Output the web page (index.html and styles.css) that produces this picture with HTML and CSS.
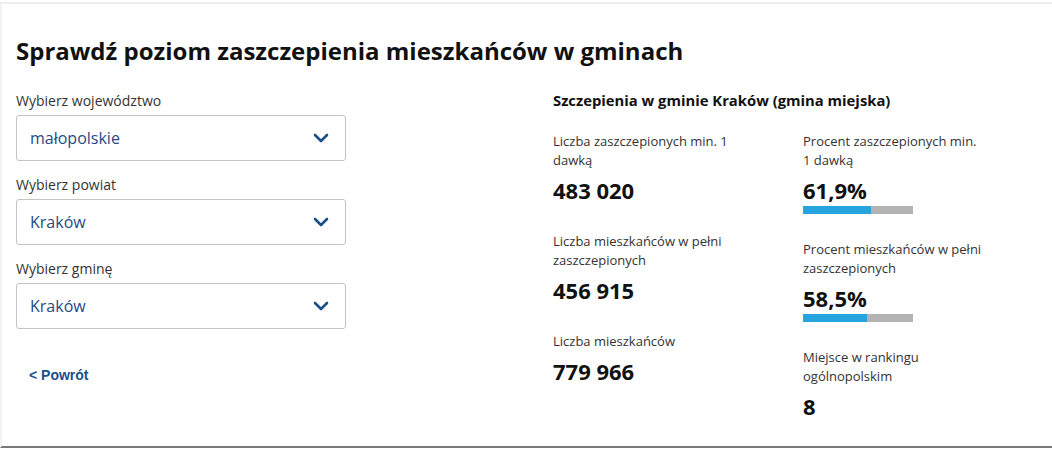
FILE: index.html
```
<!DOCTYPE html>
<html lang="pl">
<head>
<meta charset="utf-8">
<link rel="stylesheet" href="styles.css">
</head>
<body>
<div class="page">
  <section class="card">
    <h1 class="title">Sprawdź poziom zaszczepienia mieszkańców w gminach</h1>
    <div class="layout">
      <div class="filters">
        <div class="field">
          <div class="label">Wybierz województwo</div>
          <div class="select"><span>małopolskie</span><svg class="chev" width="16" height="10" viewBox="0 0 16 10"><path d="M2 2 L8 8 L14 2" fill="none" stroke="#1b4f8c" stroke-width="2.6" stroke-linecap="round" stroke-linejoin="round"/></svg></div>
        </div>
        <div class="field">
          <div class="label">Wybierz powiat</div>
          <div class="select"><span>Kraków</span><svg class="chev" width="16" height="10" viewBox="0 0 16 10"><path d="M2 2 L8 8 L14 2" fill="none" stroke="#1b4f8c" stroke-width="2.6" stroke-linecap="round" stroke-linejoin="round"/></svg></div>
        </div>
        <div class="field">
          <div class="label">Wybierz gminę</div>
          <div class="select"><span>Kraków</span><svg class="chev" width="16" height="10" viewBox="0 0 16 10"><path d="M2 2 L8 8 L14 2" fill="none" stroke="#1b4f8c" stroke-width="2.6" stroke-linecap="round" stroke-linejoin="round"/></svg></div>
        </div>
        <a class="back">&lt; Powrót</a>
      </div>
      <div class="stats">
        <h2 class="subtitle">Szczepienia w gminie Kraków (gmina miejska)</h2>
        <div class="cols">
          <div class="col">
            <div class="item">
              <div class="slabel">Liczba zaszczepionych min. 1 dawką</div>
              <div class="value">483 020</div>
            </div>
            <div class="item">
              <div class="slabel">Liczba mieszkańców w pełni zaszczepionych</div>
              <div class="value">456 915</div>
            </div>
            <div class="item">
              <div class="slabel">Liczba mieszkańców</div>
              <div class="value">779 966</div>
            </div>
          </div>
          <div class="col">
            <div class="item">
              <div class="slabel">Procent zaszczepionych min. 1 dawką</div>
              <div class="value">61,9%</div>
              <div class="bar"><div class="fill" style="width:61.9%"></div></div>
            </div>
            <div class="item">
              <div class="slabel">Procent mieszkańców w pełni zaszczepionych</div>
              <div class="value">58,5%</div>
              <div class="bar"><div class="fill" style="width:58.5%"></div></div>
            </div>
            <div class="item">
              <div class="slabel">Miejsce w rankingu ogólnopolskim</div>
              <div class="value">8</div>
            </div>
          </div>
        </div>
      </div>
    </div>
  </section>
</div>
</body>
</html>
```
FILE: styles.css
```
* { box-sizing: border-box; }
html, body { margin: 0; padding: 0; background: #fff; }
body { font-family: "Open Sans", "Noto Sans", sans-serif; color: #111; }
.page { padding-top: 2px; height: 449px; }
.card {
  height: 446px;
  border-top: 2px solid #ededed;
  border-left: 2px solid #f2f2f2;
  border-bottom: 2px solid #7a7a7a;
  padding: 31px 14px 0 14px;
}
.title {
  margin: 0 0 24px 0;
  font-size: 24px;
  font-weight: 700;
  line-height: 32px;
  color: #111;
}
.layout { display: grid; grid-template-columns: 330px 1fr; column-gap: 207px; }
.filters { display: flex; flex-direction: column; align-items: flex-start; }
.field { width: 100%; margin-bottom: 14px; }
.field:first-child { margin-bottom: 14px; }
.label { font-size: 14px; line-height: 20px; color: #333; margin-bottom: 4px; }
.select {
  height: 46px;
  border: 1px solid #c4c4c4;
  border-radius: 3px;
  display: flex;
  align-items: center;
  justify-content: space-between;
  padding: 0 16px 0 13px;
  font-size: 16px;
  color: #1f4a85;
}
.chev { display: block; }
.back {
  margin-top: 24px;
  padding-left: 13px;
  font-family: "Liberation Sans", Arial, sans-serif;
  font-weight: 700;
  font-size: 14px;
  line-height: 16px;
  color: #1b4f8c;
}
.subtitle { margin: 0 0 23px 0; font-size: 14.8px; font-weight: 700; line-height: 18px; color: #111; }
.cols { display: flex; }
.col { width: 250px; display: flex; flex-direction: column; }
.item { width: 180px; margin-bottom: 26px; }
.slabel { font-size: 13px; line-height: 19px; color: #333; }
.value { font-size: 22px; font-weight: 700; line-height: 30px; margin-top: 5px; margin-bottom: 1px; color: #111; }
.bar { width: 110px; height: 8px; background: #b3b3b3; }
.fill { height: 100%; background: #26a4de; }
```
